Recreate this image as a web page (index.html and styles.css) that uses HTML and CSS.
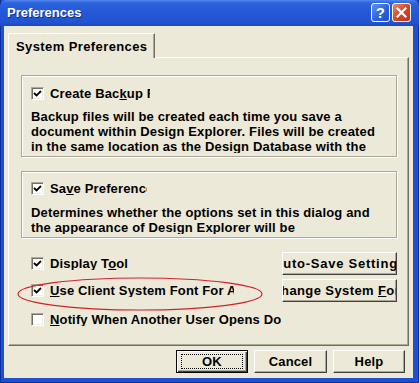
FILE: index.html
```html
<!DOCTYPE html>
<html lang="en">
<head>
    <meta charset="UTF-8">
    <title>Preferences</title>
    <link rel="stylesheet" href="styles.css">
</head>
<body>
    <div class="window">
        <div class="titlebar">
            <span class="title">Preferences</span>
            <div class="caption-buttons">
                <span class="cap-btn help">?</span>
                <span class="cap-btn close">
                    <svg width="11" height="11" viewBox="0 0 11 11"><path d="M1.5 1.5 L9.5 9.5 M9.5 1.5 L1.5 9.5" stroke="#fff" stroke-width="2.2" stroke-linecap="square"/></svg>
                </span>
            </div>
        </div>
        <div class="client">
            <div class="tabs">
                <div class="tab">System Preferences</div>
            </div>
            <div class="panel">
                <div class="group g1">
                    <div class="check">
                        <span class="box"><svg viewBox="0 0 9 9"><path d="M1 4 L3.5 6.5 L8 2" /></svg></span>
                        <span class="label w-backup">Create Bac<u>k</u>up Files</span>
                    </div>
                    <div class="desc d1">Backup files will be created each time you save a document within Design Explorer. Files will be created in the same location as the Design Database with the extension .bak.</div>
                </div>
                <div class="group g2">
                    <div class="check">
                        <span class="box"><svg viewBox="0 0 9 9"><path d="M1 4 L3.5 6.5 L8 2" /></svg></span>
                        <span class="label w-save">Sa<u>v</u>e Preferences</span>
                    </div>
                    <div class="desc d2">Determines whether the options set in this dialog and the appearance of Design Explorer will be<br>remembered the next time you start it.</div>
                </div>
                <div class="row r1">
                    <div class="check">
                        <span class="box"><svg viewBox="0 0 9 9"><path d="M1 4 L3.5 6.5 L8 2" /></svg></span>
                        <span class="label">Display T<u>o</u>ol</span>
                    </div>
                    <button class="btn side wide"><span>Auto-Save Settings</span></button>
                </div>
                <div class="row r2">
                    <div class="check">
                        <span class="box"><svg viewBox="0 0 9 9"><path d="M1 4 L3.5 6.5 L8 2" /></svg></span>
                        <span class="label w-client"><u>U</u>se Client System Font For All</span>
                    </div>
                    <button class="btn side"><span>Change System <u>F</u>ont</span></button>
                </div>
                <div class="check r3">
                    <span class="box"></span>
                    <span class="label w-notify"><u>N</u>otify When Another User Opens Document</span>
                </div>
            </div>
            <div class="footer">
                <button class="btn default"><span class="focus">OK</span></button>
                <button class="btn cancel">Cancel</button>
                <button class="btn">Help</button>
            </div>
        </div>
        <svg class="marker" width="419" height="383" viewBox="0 0 419 383">
            <ellipse cx="140" cy="294" rx="122" ry="16" fill="none" stroke="#d2232a" stroke-width="1.2"/>
        </svg>
    </div>
</body>
</html>
```

FILE: styles.css
```css
body {
    margin: 0;
    font-family: 'Liberation Sans', Arial, sans-serif;
    font-size: 13px;
    letter-spacing: 0.15px;
    font-weight: bold;
    color: #000;
}

.window {
    position: relative;
    width: 419px;
    height: 383px;
    display: flex;
    flex-direction: column;
    background: #1f4fd2;
    box-shadow: inset 1px 0 #0a2f9f, inset -1px 0 #0a2f9f, inset 0 -1px #0a2f9f;
}

/* title bar */
.titlebar {
    height: 26px;
    display: flex;
    align-items: center;
    justify-content: space-between;
    background: linear-gradient(to bottom, #4f86ec 0, #2c62dc 3px, #2457d6 50%, #2254d2 85%, #1c48c0 100%);
    border-radius: 6px 6px 0 0;
}
.title {
    margin-left: 7px;
    margin-top: -1px;
    font-size: 13px;
    letter-spacing: 0;
    color: #fff;
    text-shadow: 1px 1px #0f2e8a;
}
.caption-buttons {
    display: flex;
    gap: 2px;
    margin-right: 8px;
    margin-top: -1px;
}
.cap-btn {
    width: 19px;
    height: 19px;
    box-sizing: border-box;
    border: 1px solid #fff;
    border-radius: 3px;
    display: flex;
    align-items: center;
    justify-content: center;
    color: #fff;
    font-size: 15px;
}
.help {
    background: linear-gradient(135deg, #5f92f0, #2a5fdc 60%, #2050cc);
}
.close {
    background: linear-gradient(135deg, #e8876a, #d5431f 55%, #c2331a);
}

/* client area */
.client {
    height: 352px;
    margin: 0 6px 0 4px;
    padding: 7px 4px 0 4px;
    box-sizing: border-box;
    background: #ece9d8;
}
.tabs {
    height: 24px;
    display: flex;
}
.tab {
    position: relative;
    z-index: 1;
    width: 147px;
    height: 25px;
    box-sizing: border-box;
    padding: 5px 0 0 7px;
    font-size: 13px;
    letter-spacing: 0.4px;
    background: #ece9d8;
    border-top: 1px solid #fff;
    border-left: 1px solid #fff;
    border-right: 1px solid #716f64;
    box-shadow: inset -1px 0 #aca899;
}
.panel {
    height: 289px;
    box-sizing: border-box;
    padding: 17px 11px 0 12px;
    border-top: 1px solid #fff;
    border-left: 1px solid #fff;
    border-right: 1px solid #716f64;
    border-bottom: 1px solid #716f64;
    box-shadow: inset -1px -1px #aca899;
}

/* group boxes */
.group {
    box-sizing: border-box;
    padding: 11px 9px 0 9px;
    border: 1px solid #aca899;
    box-shadow: inset 1px 1px #fff, 1px 1px #fff;
    overflow: hidden;
}
.g1 {
    height: 82px;
}
.g2 {
    height: 67px;
    margin-top: 14px;
    padding-top: 10px;
}
.desc {
    line-height: 15px;
    overflow: hidden;
}
.d1 {
    margin-top: 9px;
    height: 44px;
}
.d2 {
    margin-top: 10px;
    height: 29px;
}

/* check boxes */
.check {
    display: flex;
    align-items: center;
    gap: 6px;
    height: 13px;
    line-height: 13px;
}
.box {
    width: 13px;
    height: 13px;
    box-sizing: border-box;
    flex: none;
    display: flex;
    align-items: center;
    justify-content: center;
    background: #fff;
    border: 1px solid;
    border-color: #aca899 #fff #fff #aca899;
    box-shadow: inset 1px 1px #716f64, inset -1px -1px #f1efe2;
}
.box svg {
    width: 9px;
    height: 9px;
}
.box path {
    fill: none;
    stroke: #000;
    stroke-width: 1.8;
}
.label {
    white-space: nowrap;
    overflow: hidden;
}
.w-backup { width: 100px; }
.w-save { width: 97px; }
.w-client { width: 184px; }
.w-notify { width: 231px; }

.row {
    display: flex;
    align-items: center;
    justify-content: space-between;
    margin-left: 10px;
}
.r1 { margin-top: 14px; }
.r2 { margin-top: 4px; }
.r3 {
    margin-top: 11px;
    margin-left: 10px;
}

/* buttons */
.btn {
    height: 23px;
    box-sizing: border-box;
    padding: 0;
    font: inherit;
    letter-spacing: inherit;
    color: #000;
    display: flex;
    align-items: center;
    justify-content: center;
    overflow: hidden;
    white-space: nowrap;
    background: #ece9d8;
    border: 1px solid;
    border-color: #fff #404040 #404040 #fff;
    box-shadow: inset -1px -1px #aca899;
}
.side {
    width: 115px;
    letter-spacing: 0.4px;
}
.side.wide {
    letter-spacing: 0.75px;
}
.footer {
    display: flex;
    justify-content: flex-end;
    gap: 6px;
    padding: 4px 4px 0 0;
}
.footer .btn {
    width: 72px;
}
.footer .cancel {
    width: 73px;
}
.default {
    border: 1px solid #000;
    box-shadow: inset 1px 1px #fff, inset -1px -1px #404040, inset -2px -2px #aca899;
}
.focus {
    box-sizing: border-box;
    width: 62px;
    height: 15px;
    line-height: 13px;
    text-align: center;
    border: 1px dotted #000;
}

.marker {
    position: absolute;
    left: 0;
    top: 0;
    pointer-events: none;
}
```
